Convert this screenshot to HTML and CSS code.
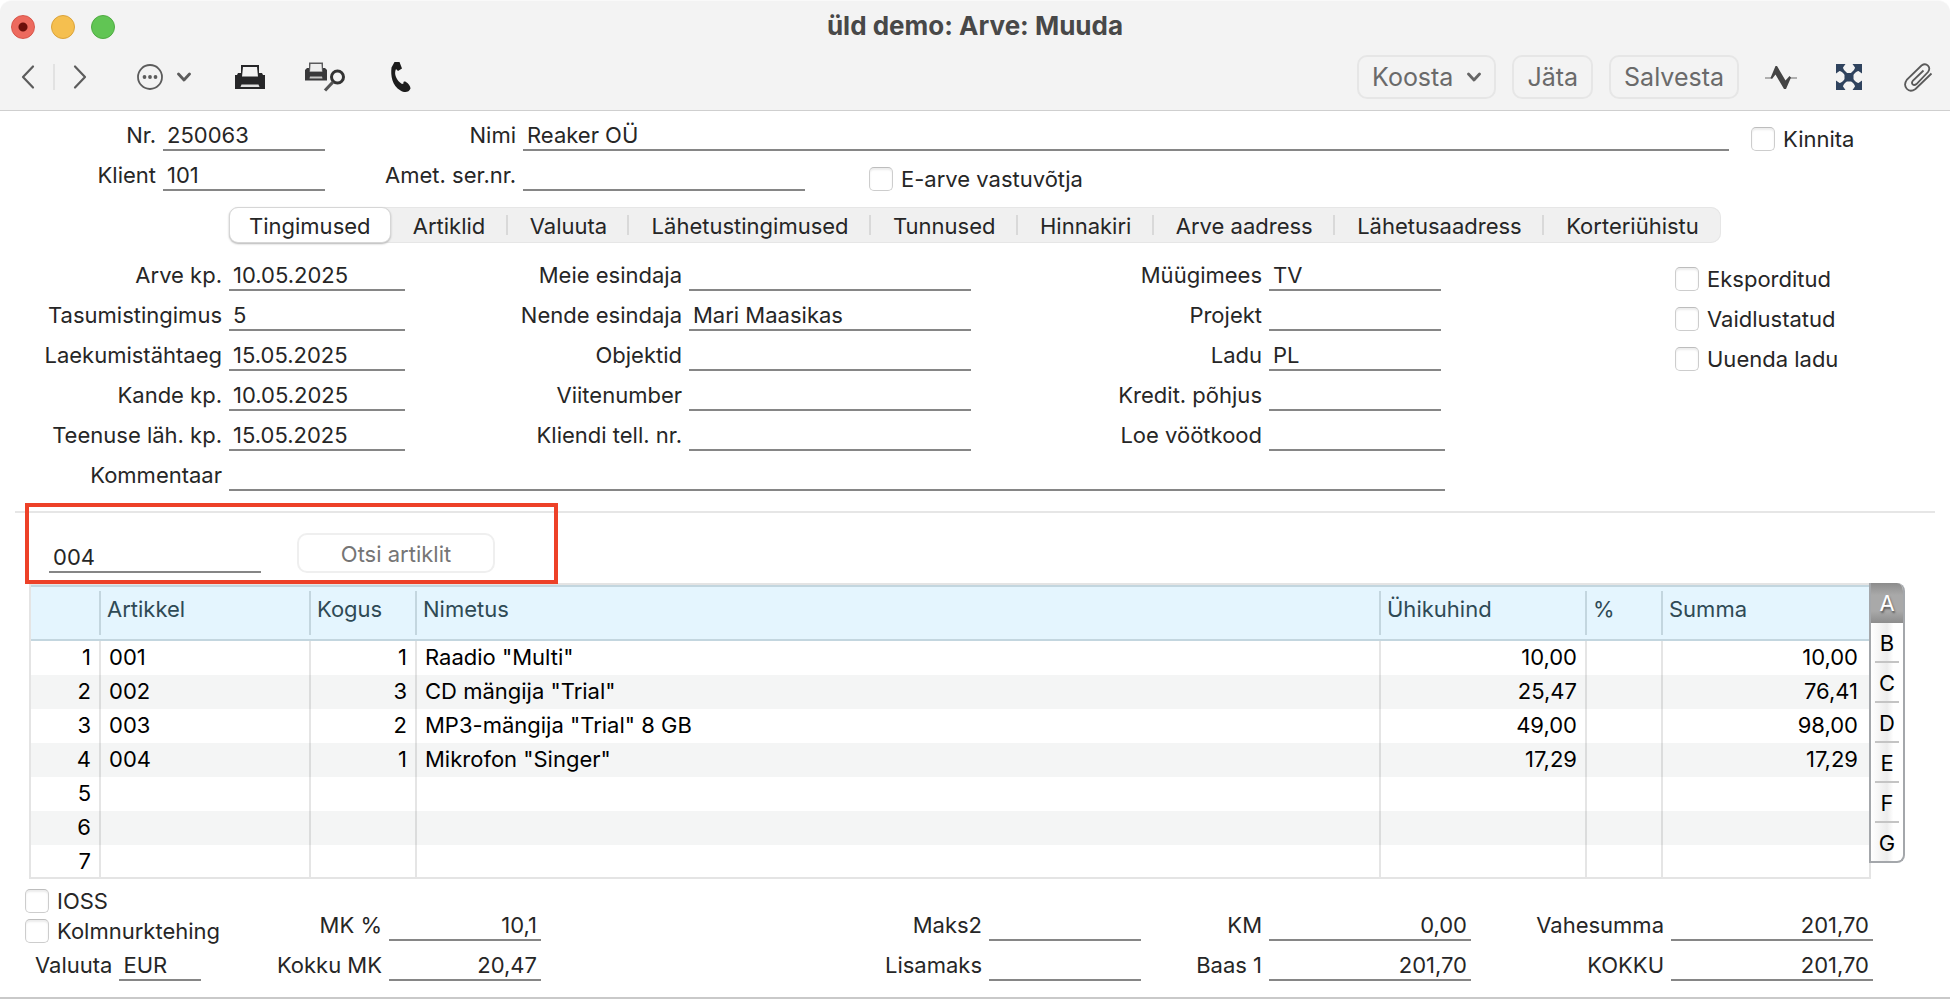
FILE: index.html
```html
<!DOCTYPE html>
<html lang="et">
<head>
  <meta charset="UTF-8" />
  <meta name="viewport" content="width=device-width, initial-scale=1.0"/>
  <title>üld demo: Arve: Muuda</title>
  <link rel="stylesheet" href="styles.css">
</head>
<body>
  <header class="window-head">
    <div class="title-bar">
      <div class="lights">
        <button type="button" class="light light-close" aria-label="Sulge"></button>
        <button type="button" class="light light-min" aria-label="Minimeeri"></button>
        <button type="button" class="light light-max" aria-label="Suurenda"></button>
      </div>
      <h1>üld demo: Arve: Muuda</h1>
    </div>

    <div class="toolbar">
      <button type="button" class="icon-btn nav-btn" aria-label="Eelmine">
        <svg width="16" height="26" viewBox="0 0 16 26"><path d="M13 2.500L3 13l10 10.500" fill="none" stroke="#5c5c5c" stroke-width="2.200" stroke-linecap="round" stroke-linejoin="round"/></svg>
      </button>
      <span class="divider"></span>
      <button type="button" class="icon-btn nav-btn" aria-label="Järgmine">
        <svg width="16" height="26" viewBox="0 0 16 26"><path d="M3 2.500L13 13 3 23.500" fill="none" stroke="#5c5c5c" stroke-width="2.200" stroke-linecap="round" stroke-linejoin="round"/></svg>
      </button>
      <button type="button" class="icon-btn more-btn" aria-label="Toimingud">
        <svg width="26" height="26" viewBox="0 0 26 26"><circle cx="13" cy="13" r="12" fill="none" stroke="#5c5c5c" stroke-width="1.800"/><g fill="#5c5c5c"><circle cx="7.500" cy="13" r="1.900"/><circle cx="13" cy="13" r="1.900"/><circle cx="18.500" cy="13" r="1.900"/></g></svg>
        <svg width="14" height="10" viewBox="0 0 14 10"><path d="M1.500 2L7 8l5.500-6" fill="none" stroke="#5c5c5c" stroke-width="2.800" stroke-linecap="round" stroke-linejoin="round"/></svg>
      </button>
      <button type="button" class="icon-btn print-btn" aria-label="Trüki">
        <svg width="30" height="26" viewBox="0 0 30 26">
          <path d="M3 9h24l1 2h2v14H0V11h2z" fill="#262628"/>
          <path d="M6 1h18v13H6z" fill="#262628"/>
          <path d="M8 3h14l1 9.500H7z" fill="#f3f3f3"/>
          <path d="M6.500 20.500h17l1 2.500h-19z" fill="#e0e0e0"/>
        </svg>
      </button>
      <button type="button" class="icon-btn preview-btn" aria-label="Eelvaade">
        <svg width="40" height="30" viewBox="0 0 40 30">
          <path d="M2 6h18l2 2v10.500H0V8z" fill="#38383a"/>
          <path d="M4 .500h14V10H4z" fill="#5a5a5c"/>
          <path d="M5.500 2h11l.500 7.500H5z" fill="#eee"/>
          <path d="M5 14.500h12l.500 2h-13z" fill="#c4c4c4"/>
          <circle cx="32.500" cy="15" r="6" fill="#f3f3f3" stroke="#333" stroke-width="3"/>
          <path d="M28 20l-8 8.500" stroke="#555" stroke-width="3.200"/>
        </svg>
      </button>
      <button type="button" class="icon-btn call-btn" aria-label="Helista">
        <svg width="22" height="32" viewBox="0 0 22 32">
          <path d="M4.500 1h5l2.500 6.500-4 2.500-2-2c-2.500 5 .500 11.500 6 15l1.500-.500c-.500-2 1-2.500 2.500-1.500 2.500 1.500 4.500 4 4.500 6.500-1.500 4-6 4.500-10 2C2 25 .500 14 1.500 6.500z" fill="#1c1c1c"/>
        </svg>
      </button>

      <span class="spacer"></span>

      <button type="button" class="tool-btn">Koosta
        <svg width="14" height="10" viewBox="0 0 14 10"><path d="M1.500 2L7 8l5.500-6" fill="none" stroke="#666" stroke-width="2.800" stroke-linecap="round" stroke-linejoin="round"/></svg>
      </button>
      <button type="button" class="tool-btn">Jäta</button>
      <button type="button" class="tool-btn">Salvesta</button>
      <button type="button" class="icon-btn activity-btn" aria-label="Tegevused">
        <svg width="32" height="26" viewBox="0 0 32 26"><path d="M0 14h6.500M25 14h7" stroke="#999" stroke-width="1.500"/><path d="M5.500 14L10.500 2h1.500l8.500 14.500L24.500 12l1.500 1.500-5 11.500h-2L10.500 10.500 7 15z" fill="#444"/></svg>
      </button>
      <button type="button" class="icon-btn expand-btn" aria-label="Lingid">
        <svg width="28" height="28" viewBox="0 0 28 28">
          <path d="M5 5l18 18M23 5L5 23" stroke="#2f435e" stroke-width="3"/>
          <path d="M1 1h9.500L8 4.500 9 8 8 9 4.500 8 1 10.500zM27 1v9.500L23.500 8 20 9l-1-1 1-3.500L17.500 1zM1 27v-9.500L4.500 20 8 19l1 1-1 3.500 2.500 3.500zM27 27h-9.500l2.500-3.500-1-3.500 1-1 3.500 1 3.500-2.500zM9.500 10h9v8.500h-9z" fill="#2f435e"/>
        </svg>
      </button>
      <button type="button" class="icon-btn" aria-label="Manused">
        <svg width="30" height="32" viewBox="0 0 30 32"><path d="M20.500 9.500L10 19.500c-2.500 3 .500 6 3.500 3.500L25 11c3.500-5-1.500-10-6.500-6.500L4 18.500c-5 7 1.500 14.500 8.500 9.500L28.500 12.500" fill="none" stroke="#5a5a5a" stroke-width="1.800"/></svg>
      </button>
    </div>
  </header>

  <main>
    <div class="row head-row">
      <label for="nr">Nr.</label>
      <input type="text" id="nr" value="250063">
      <label for="nimi">Nimi</label>
      <input type="text" id="nimi" value="Reaker OÜ">
      <label class="check"><input type="checkbox"> Kinnita</label>
    </div>
    <div class="row head-row second">
      <label for="klient">Klient</label>
      <input type="text" id="klient" value="101">
      <label for="amet">Amet. ser.nr.</label>
      <input type="text" id="amet">
      <label class="check"><input type="checkbox"> E-arve vastuvõtja</label>
    </div>

    <nav class="tabs">
      <button type="button" class="tab active">Tingimused</button>
      <button type="button" class="tab">Artiklid</button>
      <button type="button" class="tab">Valuuta</button>
      <button type="button" class="tab">Lähetustingimused</button>
      <button type="button" class="tab">Tunnused</button>
      <button type="button" class="tab">Hinnakiri</button>
      <button type="button" class="tab">Arve aadress</button>
      <button type="button" class="tab">Lähetusaadress</button>
      <button type="button" class="tab">Korteriühistu</button>
    </nav>

    <div class="row terms-row">
      <label for="arve-kp">Arve kp.</label>
      <input type="text" id="arve-kp" value="10.05.2025">
      <label for="meie">Meie esindaja</label>
      <input type="text" id="meie">
      <label for="myygimees">Müügimees</label>
      <input type="text" id="myygimees" class="short" value="TV">
      <label class="check"><input type="checkbox"> Eksporditud</label>
    </div>
    <div class="row terms-row">
      <label for="tasumine">Tasumistingimus</label>
      <input type="text" id="tasumine" value="5">
      <label for="nende">Nende esindaja</label>
      <input type="text" id="nende" value="Mari Maasikas">
      <label for="projekt">Projekt</label>
      <input type="text" id="projekt" class="short">
      <label class="check"><input type="checkbox"> Vaidlustatud</label>
    </div>
    <div class="row terms-row">
      <label for="laekumine">Laekumistähtaeg</label>
      <input type="text" id="laekumine" value="15.05.2025">
      <label for="objektid">Objektid</label>
      <input type="text" id="objektid">
      <label for="ladu">Ladu</label>
      <input type="text" id="ladu" class="short" value="PL">
      <label class="check"><input type="checkbox"> Uuenda ladu</label>
    </div>
    <div class="row terms-row">
      <label for="kande-kp">Kande kp.</label>
      <input type="text" id="kande-kp" value="10.05.2025">
      <label for="viitenumber">Viitenumber</label>
      <input type="text" id="viitenumber">
      <label for="kredit">Kredit. põhjus</label>
      <input type="text" id="kredit" class="short">
    </div>
    <div class="row terms-row">
      <label for="teenus">Teenuse läh. kp.</label>
      <input type="text" id="teenus" value="15.05.2025">
      <label for="tellimus">Kliendi tell. nr.</label>
      <input type="text" id="tellimus">
      <label for="vootkood">Loe vöötkood</label>
      <input type="text" id="vootkood">
    </div>
    <div class="row terms-row">
      <label for="kommentaar">Kommentaar</label>
      <input type="text" id="kommentaar" class="wide">
    </div>

    <div class="item-search">
      <input type="text" aria-label="Artikkel" value="004">
      <button type="button" class="search-btn">Otsi artiklit</button>
      <div class="highlight"></div>
    </div>

    <div class="items">
      <div class="table-wrap">
        <table>
          <colgroup>
            <col class="c-row"><col class="c-code"><col class="c-qty"><col>
            <col class="c-price"><col class="c-pct"><col class="c-sum">
          </colgroup>
          <thead>
            <tr><th></th><th>Artikkel</th><th>Kogus</th><th>Nimetus</th><th>Ühikuhind</th><th>%</th><th>Summa</th></tr>
          </thead>
          <tbody>
            <tr><td class="num">1</td><td>001</td><td class="num">1</td><td>Raadio "Multi"</td><td class="num">10,00</td><td></td><td class="num">10,00</td></tr>
            <tr><td class="num">2</td><td>002</td><td class="num">3</td><td>CD mängija "Trial"</td><td class="num">25,47</td><td></td><td class="num">76,41</td></tr>
            <tr><td class="num">3</td><td>003</td><td class="num">2</td><td>MP3-mängija "Trial" 8 GB</td><td class="num">49,00</td><td></td><td class="num">98,00</td></tr>
            <tr><td class="num">4</td><td>004</td><td class="num">1</td><td>Mikrofon "Singer"</td><td class="num">17,29</td><td></td><td class="num">17,29</td></tr>
            <tr><td class="num">5</td><td></td><td></td><td></td><td></td><td></td><td></td></tr>
            <tr><td class="num">6</td><td></td><td></td><td></td><td></td><td></td><td></td></tr>
            <tr><td class="num">7</td><td></td><td></td><td></td><td></td><td></td><td></td></tr>
          </tbody>
        </table>
      </div>
      <div class="side-tabs">
        <button type="button" class="side-tab active">A</button>
        <button type="button" class="side-tab">B</button>
        <button type="button" class="side-tab">C</button>
        <button type="button" class="side-tab">D</button>
        <button type="button" class="side-tab">E</button>
        <button type="button" class="side-tab">F</button>
        <button type="button" class="side-tab">G</button>
      </div>
    </div>

    <div class="summary">
      <div class="options">
        <label class="check"><input type="checkbox"> IOSS</label>
        <label class="check"><input type="checkbox"> Kolmnurktehing</label>
        <div class="currency">
          <label for="valuuta">Valuuta</label>
          <input type="text" id="valuuta" value="EUR">
        </div>
      </div>
      <div class="totals">
        <label for="mk-pct">MK %</label>
        <input type="text" id="mk-pct" value="10,1">
        <label for="maks2">Maks2</label>
        <input type="text" id="maks2">
        <label for="km">KM</label>
        <input type="text" id="km" value="0,00">
        <label for="vahesumma">Vahesumma</label>
        <input type="text" id="vahesumma" value="201,70">
        <label for="kokku-mk">Kokku MK</label>
        <input type="text" id="kokku-mk" value="20,47">
        <label for="lisamaks">Lisamaks</label>
        <input type="text" id="lisamaks">
        <label for="baas">Baas 1</label>
        <input type="text" id="baas" value="201,70">
        <label for="kokku">KOKKU</label>
        <input type="text" id="kokku" value="201,70">
      </div>
    </div>
  </main>
</body>
</html>
```
FILE: styles.css
```css
/* Reset & Base styles */
* {
  box-sizing: border-box;
  margin: 0;
  padding: 0;
}

body {
  font-family: Inter, 'Liberation Sans', sans-serif;
  font-size: 22px;
  line-height: 28px;
  color: #262626;
  background: #fff;
}

button,
input {
  font: inherit;
  color: inherit;
  border: none;
  border-radius: 0;
  background: none;
}

/* Window head */
.window-head {
  background: #f3f3f3;
  border: 1px solid #e2e2e2;
  border-top-color: #f9f9f9;
  border-bottom-color: #cfcfcf;
  border-radius: 12px 12px 0 0;
  border-width: 1px 0;
}

.title-bar {
  position: relative;
  height: 50px;
  text-align: center;
}

.title-bar h1 {
  padding-top: 10px;
  font-size: 26px;
  line-height: 30px;
  font-weight: 700;
  color: #484848;
}

.lights {
  position: absolute;
  left: 11px;
  top: 14px;
  display: flex;
  gap: 16px;
}

.light {
  width: 24px;
  height: 24px;
  border-radius: 50%;
}

.light-close {
  background: radial-gradient(circle, #6d0f0a 0 4px, #ed6a5e 5px);
  border: 1px solid #d85549;
}

.light-min {
  background: #f5bf4f;
  border: 1px solid #dba33a;
}

.light-max {
  background: #61c554;
  border: 1px solid #4fab42;
}

.toolbar {
  display: flex;
  align-items: center;
  height: 59px;
  padding: 0 17px 7px 20px;
}

.icon-btn {
  display: flex;
  align-items: center;
}

.divider {
  width: 2px;
  height: 26px;
  margin: 0 17px;
  background: #e2e2e2;
}

.more-btn {
  gap: 14px;
  margin-left: 49px;
}

.print-btn {
  margin-left: 44px;
}

.preview-btn {
  margin-left: 40px;
}

.call-btn {
  margin-left: 45px;
}

.spacer {
  flex: 1;
}

.tool-btn {
  display: flex;
  align-items: center;
  gap: 14px;
  height: 44px;
  margin-right: 16px;
  padding: 0 13px;
  border: 2px solid #e6e6e6;
  border-radius: 10px;
  font-size: 25px;
  color: #6a6a6a;
}

.activity-btn {
  margin: 0 38px 0 10px;
}

.expand-btn {
  margin-right: 40px;
}

/* Form rows */
.row {
  display: grid;
  align-items: end;
  column-gap: 7px;
  height: 40px;
  padding: 0 40px 0 29px;
}

.head-row {
  grid-template-columns: 127px 162fr 184fr 1206fr 8fr 159fr;
}

.head-row.second {
  grid-template-columns: 127px 162fr 184fr 282fr 50fr 1041fr;
}

.head-row .check {
  grid-column: 6;
}

.terms-row {
  grid-template-columns: 193px 176fr 270fr 282fr 284fr 176fr 216fr 235fr;
}

.terms-row .check {
  grid-column: 8;
}

label {
  padding-bottom: 2px;
  text-align: right;
  white-space: nowrap;
}

input[type="text"] {
  width: 100%;
  min-width: 0;
  height: 30px;
  padding: 0 4px;
  border-bottom: 2px solid #868686;
  outline: none;
}

input.short {
  width: calc(100% - 4px);
}

input.wide {
  grid-column: 2 / 7;
}

.check {
  display: flex;
  align-items: center;
  gap: 8px;
  height: 24px;
  padding: 0;
  text-align: left;
}

.check input {
  flex: none;
  appearance: none;
  width: 24px;
  height: 24px;
  border: 1px solid #cdcdcd;
  border-top-color: #bdbdbd;
  border-radius: 5px;
  background: #fff;
  box-shadow: inset 0 2px 2px #ececec;
}

/* Tabs */
.tabs {
  display: flex;
  height: 36px;
  margin: 16px 229px 8px;
  border-radius: 10px;
  background: #f0f0f0;
  box-shadow: inset 0 0 0 1px #e6e6e6;
}

.tab {
  flex: 1 1 auto;
  padding: 2px 19px 0;
  background: linear-gradient(#d9d9d9, #d9d9d9) right center / 2px 20px no-repeat;
}

.tab.active {
  flex-grow: 0;
  border: 1px solid #d6d6d6;
  border-radius: 9px;
  background: #fff;
  box-shadow: 0 1px 2px #b5b5b5;
}

.tab:last-child {
  background: none;
}

/* Item search */
.item-search {
  position: relative;
  display: flex;
  align-items: flex-end;
  gap: 36px;
  height: 62px;
  margin: 20px 15px 10px;
  padding-left: 34px;
  border-top: 2px solid #e6e6e6;
}

.item-search input {
  width: 212px;
}

.search-btn {
  width: 198px;
  height: 40px;
  padding-top: 2px;
  border: 2px solid #efefef;
  border-radius: 10px;
  color: #757575;
}

.highlight {
  position: absolute;
  left: 10px;
  top: -10px;
  width: 533px;
  height: 81px;
  border: 4px solid #ed4128;
  pointer-events: none;
}

/* Items table */
.items {
  display: flex;
  align-items: flex-start;
  margin: 0 45px 10px 29px;
}

.table-wrap {
  flex: 1;
  border: 2px solid #e4e4e4;
}

table {
  width: 100%;
  table-layout: fixed;
  border-collapse: separate;
  border-spacing: 0;
  color: #000;
}

.c-row {
  width: 70px;
}

.c-code {
  width: 210px;
}

.c-qty {
  width: 106px;
}

.c-price {
  width: 206px;
}

.c-pct {
  width: 76px;
}

.c-sum {
  width: 206px;
}

th {
  height: 56px;
  padding: 0 6px 8px;
  border: 2px solid #c3d6df;
  border-width: 2px 0;
  background: linear-gradient(#c3d6df, #c3d6df) right center / 2px 44px no-repeat #e4f5fe;
  font-weight: 400;
  text-align: left;
  color: #2f4a55;
}

th:last-child {
  background: #e4f5fe;
}

td {
  height: 34px;
  padding: 0 8px 2px;
  border-right: 2px solid rgba(0, 0, 0, 0.1);
  white-space: nowrap;
}

td:last-child {
  padding-right: 11px;
  border-right: none;
}

tbody tr:nth-child(even) {
  background: #f4f5f5;
}

tbody tr:last-child td {
  height: 32px;
  padding-bottom: 0;
}

.num {
  text-align: right;
}

.side-tabs {
  display: flex;
  flex-direction: column;
  width: 36px;
  margin-left: -2px;
  border: 2px solid #a4a7ab;
  border-top: none;
  border-radius: 0 8px 8px 0;
  background: linear-gradient(90deg, #fff, #ececec 50%, #fff 70%);
  overflow: hidden;
  position: relative;
}

.side-tab {
  height: 40px;
  color: #000;
  background: linear-gradient(#c4c4c4, #c4c4c4) center bottom / 24px 2px no-repeat;
}

.side-tab:last-child {
  height: 38px;
  padding-top: 2px;
  background: none;
}

.side-tab.active {
  color: #fff;
  background: linear-gradient(#8c8c8c, #a9a9a9 30%, #a9a9a9 70%, #8c8c8c);
  text-shadow: 1px 2px 2px #555;
}

/* Summary */
.summary {
  display: flex;
  align-items: flex-end;
  gap: 7px;
  padding: 0 77px 16px 25px;
  border-bottom: 2px solid #c9c9c9;
  box-shadow: 0 2px #ececec;
}

.options {
  display: flex;
  flex-direction: column;
  gap: 6px;
  width: 176px;
}

.currency {
  display: flex;
  gap: 7px;
  padding: 2px 0 0 10px;
}

.totals {
  flex: 1;
  display: grid;
  grid-template-columns: 174fr 152fr 434fr 152fr 114fr 202fr 186fr 202fr;
  gap: 10px 7px;
}

.totals input {
  text-align: right;
}
```
